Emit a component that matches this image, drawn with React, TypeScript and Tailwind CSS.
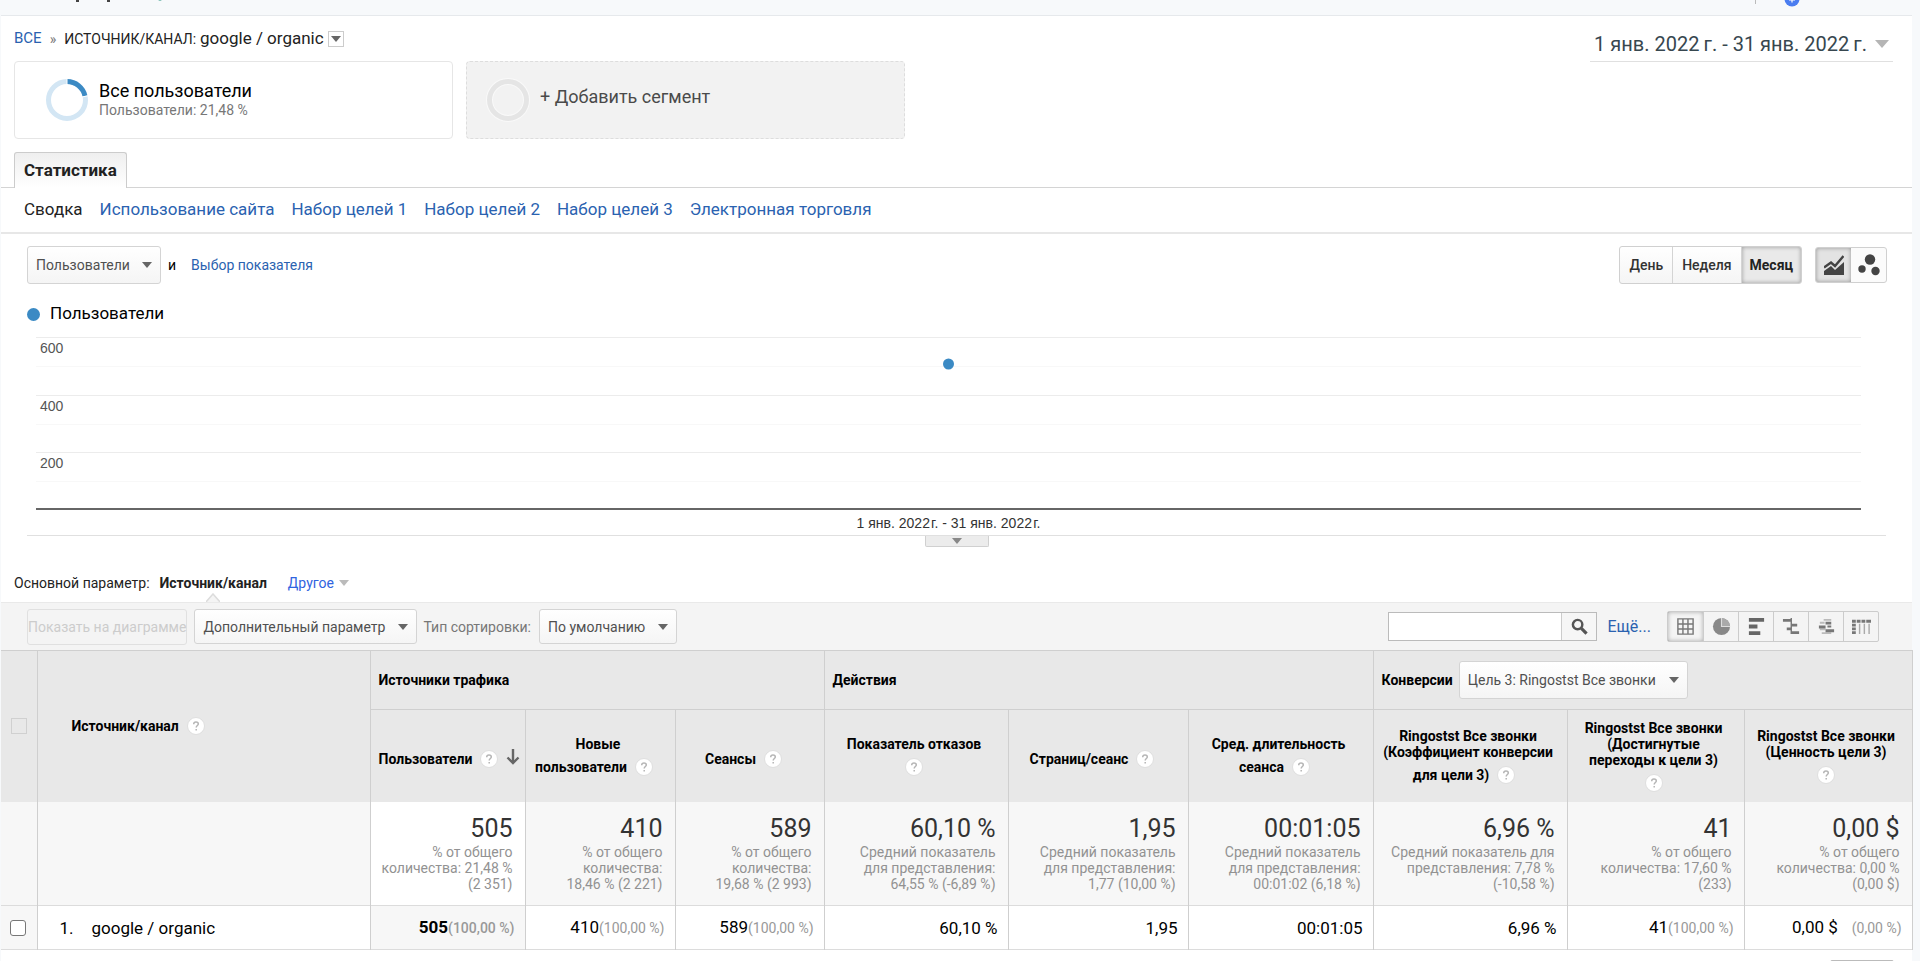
import type { ReactNode } from "react";
import { clsx } from "clsx";

const subTabs = [
  "Использование сайта",
  "Набор целей 1",
  "Набор целей 2",
  "Набор целей 3",
  "Электронная торговля",
];

const gridLines = [
  { y: 0, label: "600" },
  { y: 58, label: "400" },
  { y: 115, label: "200" },
];

const metrics = [
  {
    head: ["Пользователи"],
    sorted: true,
    total: "505",
    note: ["% от общего", "количества: 21,48 %", "(2 351)"],
    value: "505",
    share: "(100,00 %)",
  },
  {
    head: ["Новые", "пользователи"],
    total: "410",
    note: ["% от общего", "количества:", "18,46 % (2 221)"],
    value: "410",
    share: "(100,00 %)",
  },
  {
    head: ["Сеансы"],
    total: "589",
    note: ["% от общего", "количества:", "19,68 % (2 993)"],
    value: "589",
    share: "(100,00 %)",
  },
  {
    head: ["Показатель отказов", ""],
    total: "60,10 %",
    note: ["Средний показатель", "для представления:", "64,55 % (-6,89 %)"],
    value: "60,10 %",
  },
  {
    head: ["Страниц/сеанс"],
    total: "1,95",
    note: ["Средний показатель", "для представления:", "1,77 (10,00 %)"],
    value: "1,95",
  },
  {
    head: ["Сред. длительность", "сеанса"],
    total: "00:01:05",
    note: ["Средний показатель", "для представления:", "00:01:02 (6,18 %)"],
    value: "00:01:05",
  },
  {
    head: ["Ringostst Все звонки", "(Коэффициент конверсии", "для цели 3)"],
    total: "6,96 %",
    note: ["Средний показатель для", "представления: 7,78 %", "(-10,58 %)"],
    value: "6,96 %",
  },
  {
    head: ["Ringostst Все звонки", "(Достигнутые", "переходы к цели 3)", ""],
    total: "41",
    note: ["% от общего", "количества: 17,60 %", "(233)"],
    value: "41",
    share: "(100,00 %)",
  },
  {
    head: ["Ringostst Все звонки", "(Ценность цели 3)", ""],
    total: "0,00 $",
    note: ["% от общего", "количества: 0,00 %", "(0,00 $)"],
    value: "0,00 $",
    share: "(0,00 %)",
    spaced: true,
  },
];

function Caret({ className }: { className?: string }) {
  return (
    <svg viewBox="0 0 10 6" className={clsx("h-[6px] w-[10px]", className)}>
      <path d="M0 0h10L5 6z" fill="currentColor" />
    </svg>
  );
}

function Dropdown({
  label,
  value,
  className,
}: {
  label: string;
  value: string;
  className?: string;
}) {
  return (
    <span className="relative inline-flex items-center">
      <select
        aria-label={label}
        className={clsx(
          "appearance-none rounded-[3px] border border-[#d4d4d4] bg-linear-to-b from-white to-[#f5f5f5] pr-[30px] pl-2 text-sm text-[#505050]",
          className,
        )}
      >
        <option>{value}</option>
      </select>
      <Caret className="pointer-events-none absolute right-[9px] text-[#666]" />
    </span>
  );
}

function Help() {
  return (
    <svg viewBox="0 0 18 18" className="mx-2 inline-block h-[18px] w-[18px] shrink-0">
      <circle cx="9" cy="9" r="8.5" fill="#fff" stroke="#dedede" />
      <path
        d="M6.7 7.2c0-1.4 1-2.2 2.3-2.2s2.3.8 2.3 2c0 1.5-2.1 1.7-2.1 3.6M9.2 12v1.5"
        fill="none"
        stroke="#b5b5b5"
        strokeWidth="1.5"
      />
    </svg>
  );
}

function Ring({ active }: { active?: boolean }) {
  return (
    <svg viewBox="0 0 44 44" className="h-11 w-11 shrink-0">
      {!active && <circle cx="22" cy="22" r="18.5" fill="none" stroke="#f9f9f9" strokeWidth="7" />}
      <circle cx="22" cy="22" r="18.5" fill="none" stroke={active ? "#d3e6f4" : "#e5e5e5"} strokeWidth="5" />
      {active && (
        <>
          <path d="M22 3.5A18.5 18.5 0 0 1 40 18" fill="none" stroke="#3b8ac4" strokeWidth="5" />
          <path d="M22 0v7M37 19l7-1.5" stroke="#fff" strokeWidth="1" />
        </>
      )}
    </svg>
  );
}

function TopBar() {
  return (
    <div className="flex h-[15px] items-start justify-between">
      <svg className="ml-[70px] h-[6px] w-[100px]" viewBox="0 0 100 6">
        <path d="M6 0h3v2H6zM37 0h3v2h-3z" fill="#444" />
        <path d="M88 0h4l-2 1z" fill="#6bb5a8" />
      </svg>
      <svg className="mr-[113px] h-[8px] w-[52px]" viewBox="0 0 52 8">
        <path d="M.5 0v4" stroke="#bbb" />
        <circle cx="37" cy="-1" r="7.5" fill="#4a7df0" />
        <path d="M34 0h6M37 0v2.5" stroke="#fff" strokeWidth="1.2" />
      </svg>
    </div>
  );
}

function Header() {
  return (
    <div className="flex h-[45px] items-start justify-between pr-[19px] pl-[13px]">
      <nav className="flex h-[45px] items-center text-base text-[#222]">
        <a href="#all" className="text-[15px] text-[#2a62b0]">
          ВСЕ
        </a>
        <span className="mx-2 text-sm text-[#777]">»</span>
        <span className="text-sm">ИСТОЧНИК/КАНАЛ:</span>
        <span className="ml-1 text-[17px]">google / organic</span>
        <button
          type="button"
          aria-label="Источник/канал"
          className="ml-1 flex h-4 w-4 items-center justify-center border border-[#ccc] bg-white text-[#666]"
        >
          <Caret />
        </button>
      </nav>
      <button
        type="button"
        className="mt-[9px] flex h-[37px] items-center gap-2 border-b border-[#e0e0e0] px-1 pt-[2px] text-xl text-[#37474f]"
      >
        1 янв. 2022&#x200A;&#x200A;г. - 31 янв. 2022&#x200A;&#x200A;г.
        <svg viewBox="0 0 14 8" className="h-2 w-[14px]">
          <path d="M0 0h14L7 8z" fill="#b5b5b5" />
        </svg>
      </button>
    </div>
  );
}

function Segments() {
  return (
    <div className="flex gap-[13px] pl-[13px]">
      <div className="flex h-[78px] w-[439px] items-center rounded-[4px] border border-[#e6e6e6] bg-white pl-[30px]">
        <Ring active />
        <div className="ml-[10px]">
          <p className="text-lg leading-5 text-black">Все пользователи</p>
          <p className="text-sm leading-[18px] text-[#777]">Пользователи: 21,48 %</p>
        </div>
      </div>
      <button
        type="button"
        className="flex h-[78px] w-[439px] items-center rounded-[4px] border border-dashed border-[#ddd] bg-[#f2f2f2] pl-[19px]"
      >
        <Ring />
        <span className="ml-[10px] pb-[6px] text-lg text-[#4a4a4a]">+ Добавить сегмент</span>
      </button>
    </div>
  );
}

function Tabs() {
  return (
    <>
      <div className="mt-[13px] flex h-9 border-b border-[#d4d4d4] pl-[13px]">
        <button
          type="button"
          className="h-9 rounded-t-[3px] border border-b-0 border-[#ccc] bg-linear-to-b from-[#efefef] to-white px-[9px] text-[17px] font-bold text-[#222]"
        >
          Статистика
        </button>
      </div>
      <nav className="flex h-[46px] items-center gap-[17px] border-b-2 border-[#e7e7e7] pl-[23px] text-[17px] text-[#2a62b0]">
        <span className="text-[#222]">Сводка</span>
        {subTabs.map((tab) => (
          <a key={tab} href="#tab">
            {tab}
          </a>
        ))}
      </nav>
    </>
  );
}

function ChartControls() {
  const period = "h-full border-r border-[#d4d4d4] px-[9px]";
  return (
    <div className="flex items-center justify-between pt-3 pr-[25px] pl-[26px]">
      <div className="flex items-center text-sm">
        <Dropdown label="Показатель" value="Пользователи" className="h-[38px]" />
        <span className="mx-[7px] text-black">и</span>
        <a href="#metric" className="ml-2 text-[#2a62b0]">
          Выбор показателя
        </a>
      </div>
      <div className="flex items-center gap-[13px]">
        <div className="flex h-[38px] overflow-hidden rounded-[3px] border border-[#d0d0d0] bg-linear-to-b from-white to-[#f5f5f5] text-sm font-medium text-[#333]">
          <button type="button" className={period}>
            День
          </button>
          <button type="button" className={period}>
            Неделя
          </button>
          <button
            type="button"
            className="h-full bg-[#e9e9e9] px-2 font-bold text-[#222] shadow-[inset_0_0_4px_rgba(0,0,0,0.35)]"
          >
            Месяц
          </button>
        </div>
        <div className="flex h-9 overflow-hidden rounded-[3px] border border-[#d0d0d0] bg-[#fbfbfb]">
          <button
            type="button"
            aria-label="График"
            className="flex w-[35px] items-center justify-center bg-[#e3e3e3] shadow-[inset_0_0_4px_rgba(0,0,0,0.35)]"
          >
            <svg viewBox="0 0 20 22" className="h-[22px] w-5">
              <path d="M0 21v-4l7-5 4 4 9-8v13z" fill="#444" />
              <path d="M0 13.500l7-5 4 3.500 8.500-10" fill="none" stroke="#444" strokeWidth="2.400" />
            </svg>
          </button>
          <button type="button" aria-label="Анимация" className="flex w-[35px] items-center justify-center">
            <svg viewBox="0 0 22 22" className="h-[22px] w-[22px]" fill="#444">
              <circle cx="12" cy="5.500" r="5.200" />
              <circle cx="4" cy="15" r="3.700" />
              <circle cx="17.500" cy="17" r="4.200" />
            </svg>
          </button>
        </div>
      </div>
    </div>
  );
}

function Chart() {
  return (
    <section className="px-[26px] pt-5">
      <div className="flex h-5 items-center gap-[10px] text-[17px] text-black">
        <span className="h-[13px] w-[13px] rounded-full bg-[#3b8ac4]" />
        Пользователи
      </div>
      <div className="mt-3 border-b border-[#e0e0e0] pr-[25px] pl-[9px]">
        <svg className="block h-[175px] w-full">
          {gridLines.map(({ y, label }) => (
            <g key={label}>
              <line x1="0" x2="100%" y1={y + 1.5} y2={y + 1.5} stroke="#ececec" />
              <line x1="0" x2="100%" y1={y + 30.5} y2={y + 30.5} stroke="#f8f8f8" />
              <text x="4" y={y + 17} className="fill-[#555] font-['Liberation_Sans',sans-serif] text-sm">
                {label}
              </text>
            </g>
          ))}
          <line x1="0" x2="100%" y1="173" y2="173" stroke="#666" strokeWidth="2" />
          <circle cx="50%" cy="28" r="5.500" fill="#3b8ac4" />
        </svg>
        <p className="h-6 text-center font-['Liberation_Sans',sans-serif] text-sm leading-6 text-[#333]">
          1 янв. 2022&#x200A;г. - 31 янв. 2022&#x200A;г.
        </p>
      </div>
      <div className="flex justify-center">
        <button
          type="button"
          aria-label="Свернуть"
          className="flex h-[11px] w-16 justify-center rounded-b-[2px] border border-t-0 border-[#d0d0d0] bg-[#ececec] pt-[2px] text-[#888]"
        >
          <Caret />
        </button>
      </div>
    </section>
  );
}

function PrimaryDimension() {
  return (
    <div className="mt-5 flex h-[35px] items-start pt-[6px] pl-[13px] text-sm leading-5 text-[#222]">
      <span>Основной параметр:</span>
      <span className="relative ml-[10px] font-bold">
        Источник/канал
        <svg viewBox="0 0 14 9" className="absolute top-5 left-1/2 h-[9px] w-[14px] -translate-x-1/2">
          <path d="M0 9L7 1l7 8z" fill="#f4f4f4" />
          <path d="M0 9L7 1l7 8" fill="none" stroke="#dcdcdc" strokeWidth="1.500" />
        </svg>
      </span>
      <button type="button" className="ml-[21px] flex items-center gap-[5px] text-[#3063e0]">
        Другое
        <Caret className="text-[#bbb]" />
      </button>
    </div>
  );
}

const views: { name: string; icon: ReactNode }[] = [
  {
    name: "Таблица",
    icon: <path d="M2 2h16v16H2zM2 7.300h16M2 12.600h16M7.300 2v16M12.600 2v16" fill="none" stroke="#777" strokeWidth="1.500" />,
  },
  {
    name: "Доля",
    icon: (
      <>
        <circle cx="10" cy="10" r="9" fill="#888" />
        <path d="M10 10V1a9 9 0 0 1 9 9z" fill="#aaa" />
        <path d="M10 1v9h9" fill="none" stroke="#ddd" strokeWidth="1.200" />
      </>
    ),
  },
  {
    name: "Эффективность",
    icon: <path d="M2 1h16v4H2zM2 8h9v4H2zM2 15h12v4H2z" fill="#666" />,
  },
  {
    name: "Сравнение",
    icon: <path d="M1 2h9v3H1zM9 1h1.500v17H9zM10 7h6v3h-6zM5 11h5v3H5zM10 15h8v3h-8z" fill="#777" />,
  },
  {
    name: "Ключевые слова",
    icon: (
      <>
        <path d="M7 2h8v2H7zM3 5h5v2H3zM3 12h6v2H3zM5 16h10v2H5z" fill="#bbb" />
        <path d="M9 5h6v3H9zM2 9h7v3H2zM11 9h4v2h-4zM9 13h9v3H9z" fill="#777" />
      </>
    ),
  },
  {
    name: "Сводная таблица",
    icon: (
      <>
        <path d="M0 3h4v3H0zM5 3h4v3H5zM10 3h4v3h-4zM15 3h5v3h-5zM0 7h4v3H0zM0 11h4v3H0zM0 15h4v3H0z" fill="#777" />
        <path d="M8 7v11M13 7v11M18 7v11" stroke="#aaa" strokeWidth="1.500" />
      </>
    ),
  },
];

function Toolbar() {
  return (
    <div className="flex h-12 items-center justify-between border-t border-[#e9e9e9] bg-[#f4f4f4] pr-[33px] pl-[26px] text-sm">
      <div className="flex items-center">
        <button
          type="button"
          disabled
          className="mr-[7px] h-9 rounded-[3px] border border-[#e0e0e0] text-[#ccc]"
        >
          Показать на диаграмме
        </button>
        <Dropdown label="Дополнительный параметр" value="Дополнительный параметр" className="h-[35px]" />
        <label className="flex items-center gap-2 pl-[6px] text-[#777]">
          Тип сортировки:
          <Dropdown label="Тип сортировки" value="По умолчанию" className="h-[35px]" />
        </label>
      </div>
      <div className="flex items-center">
        <div className="flex h-[29px] border border-[#bbb] bg-white">
          <input type="search" aria-label="Поиск" className="w-[172px] px-2 outline-none" />
          <button
            type="button"
            aria-label="Найти"
            className="flex w-[35px] items-center justify-center border-l border-[#ccc] bg-[#f6f6f6]"
          >
            <svg viewBox="0 0 18 18" className="h-[17px] w-[17px]" fill="none" stroke="#555">
              <circle cx="7" cy="7" r="5" strokeWidth="2.600" />
              <path d="M11 11l5.500 5.500" strokeWidth="3.400" />
            </svg>
          </button>
        </div>
        <a href="#more" className="mr-4 ml-[10px] text-base text-[#2a62b0]">
          Ещё...
        </a>
        <div className="flex h-[31px] rounded-[2px] border border-[#ccc]">
          {views.map(({ name, icon }, i) => (
            <button
              key={name}
              type="button"
              aria-label={name}
              className={clsx(
                "flex w-[35px] items-center justify-center",
                i > 0 && "border-l border-[#ccc]",
                i === 0 && "shadow-[inset_0_0_4px_rgba(0,0,0,0.3)]",
              )}
            >
              <svg viewBox="0 0 20 20" className="h-[19px] w-[19px]">
                {icon}
              </svg>
            </button>
          ))}
        </div>
      </div>
    </div>
  );
}

function MetricHead({ lines, sorted }: { lines: string[]; sorted?: boolean }) {
  const last = lines.length - 1;
  return (
    <th
      scope="col"
      className={clsx("border-r border-[#cfcfcf] pt-[6px] align-middle", sorted ? "pl-2" : "pr-1")}
    >
      {lines.slice(0, last).map((line) => (
        <div key={line} className="whitespace-nowrap">
          {line}
        </div>
      ))}
      <div className={clsx("flex h-[30px] items-center", sorted ? "justify-start" : "justify-center")}>
        {lines[last]}
        <Help />
        {sorted && (
          <svg viewBox="0 0 14 20" className="h-5 w-[14px] shrink-0">
            <path d="M7 0v13M1.500 8.500L7 14l5.500-5.500" fill="none" stroke="#666" strokeWidth="2.400" />
          </svg>
        )}
      </div>
    </th>
  );
}

function ReportTable() {
  const group = "border-r border-b border-[#cfcfcf] pl-2 text-left";
  return (
    <table className="w-full table-fixed border-collapse border-t border-[#cfcfcf] text-sm leading-4">
      <colgroup>
        <col className="w-[36px]" />
        <col className="w-[333px]" />
        <col className="w-[155px]" />
        <col className="w-[150px]" />
        <col className="w-[149px]" />
        <col className="w-[184px]" />
        <col className="w-[180px]" />
        <col className="w-[185px]" />
        <col className="w-[194px]" />
        <col className="w-[177px]" />
        <col className="w-[168px]" />
      </colgroup>
      <thead className="bg-[#e8e8e8] text-black">
        <tr className="h-[59px]">
          <th rowSpan={2} className="border-r border-[#cfcfcf]">
            <input
              type="checkbox"
              aria-label="Выбрать все"
              className="ml-[10px] block h-4 w-4 appearance-none border border-[#d0d0d0]"
            />
          </th>
          <th rowSpan={2} scope="col" className="border-r border-[#cfcfcf] pl-[34px]">
            <div className="flex items-center">
              Источник/канал
              <Help />
            </div>
          </th>
          <th colSpan={3} scope="colgroup" className={group}>
            Источники трафика
          </th>
          <th colSpan={3} scope="colgroup" className={group}>
            Действия
          </th>
          <th colSpan={3} scope="colgroup" className={group}>
            <div className="flex items-center gap-[6px]">
              Конверсии
              <span className="font-normal">
                <Dropdown label="Цель" value="Цель 3: Ringostst Все звонки" className="h-[38px]" />
              </span>
            </div>
          </th>
        </tr>
        <tr className="h-[92px]">
          {metrics.map(({ head, sorted }) => (
            <MetricHead key={head.join()} lines={head} sorted={sorted} />
          ))}
        </tr>
      </thead>
      <tbody>
        <tr className="h-[104px] border-b border-[#dcdcdc] bg-[#f7f7f7]">
          <td className="border-r border-[#cfcfcf]" />
          <td className="border-r border-[#cfcfcf]" />
          {metrics.map(({ head, sorted, total, note }) => (
            <td
              key={head.join()}
              className={clsx(
                "border-r border-[#cfcfcf] pt-3 pr-3 text-right align-top text-[#929292]",
                sorted && "bg-white",
              )}
            >
              <p className="text-[25px] leading-[30px] text-[#333]">{total}</p>
              {note.map((line) => (
                <p key={line} className="whitespace-nowrap">
                  {line}
                </p>
              ))}
            </td>
          ))}
        </tr>
        <tr className="h-11 border-b border-[#dcdcdc] text-[17px] text-black">
          <td className="border-r border-[#cfcfcf] bg-[#f7f7f7]">
            <input
              type="checkbox"
              aria-label="google / organic"
              className="ml-[9px] block h-4 w-4 appearance-none rounded-[3px] border border-[#777] bg-white"
            />
          </td>
          <td className="border-r border-[#cfcfcf] pl-[22px]">
            <span className="inline-block w-8">1.</span>
            google / organic
          </td>
          {metrics.map(({ head, sorted, value, share, spaced }) => (
            <td
              key={head.join()}
              className={clsx(
                "border-r border-[#cfcfcf] pr-[10px] text-right whitespace-nowrap",
                sorted && "bg-[#f7f7f7] font-bold",
              )}
            >
              {value}
              {share && (
                <span className={clsx("text-sm text-[#999]", sorted && "font-medium", spaced && "pl-[14px]")}>
                  {share}
                </span>
              )}
            </td>
          ))}
        </tr>
      </tbody>
    </table>
  );
}

export default function App() {
  return (
    <div className="h-screen overflow-hidden bg-[#f7f9fb] font-[Roboto,sans-serif]">
      <TopBar />
      <main className="mr-2 ml-px h-full border-t border-[#e6e9ec] bg-white">
        <Header />
        <Segments />
        <Tabs />
        <ChartControls />
        <Chart />
        <PrimaryDimension />
        <Toolbar />
        <ReportTable />
        <div className="mt-[10px] mr-[18px] flex justify-end">
          <button type="button" aria-label="Далее" className="h-7 w-16 rounded-[2px] border border-[#bbb]" />
        </div>
      </main>
    </div>
  );
}
